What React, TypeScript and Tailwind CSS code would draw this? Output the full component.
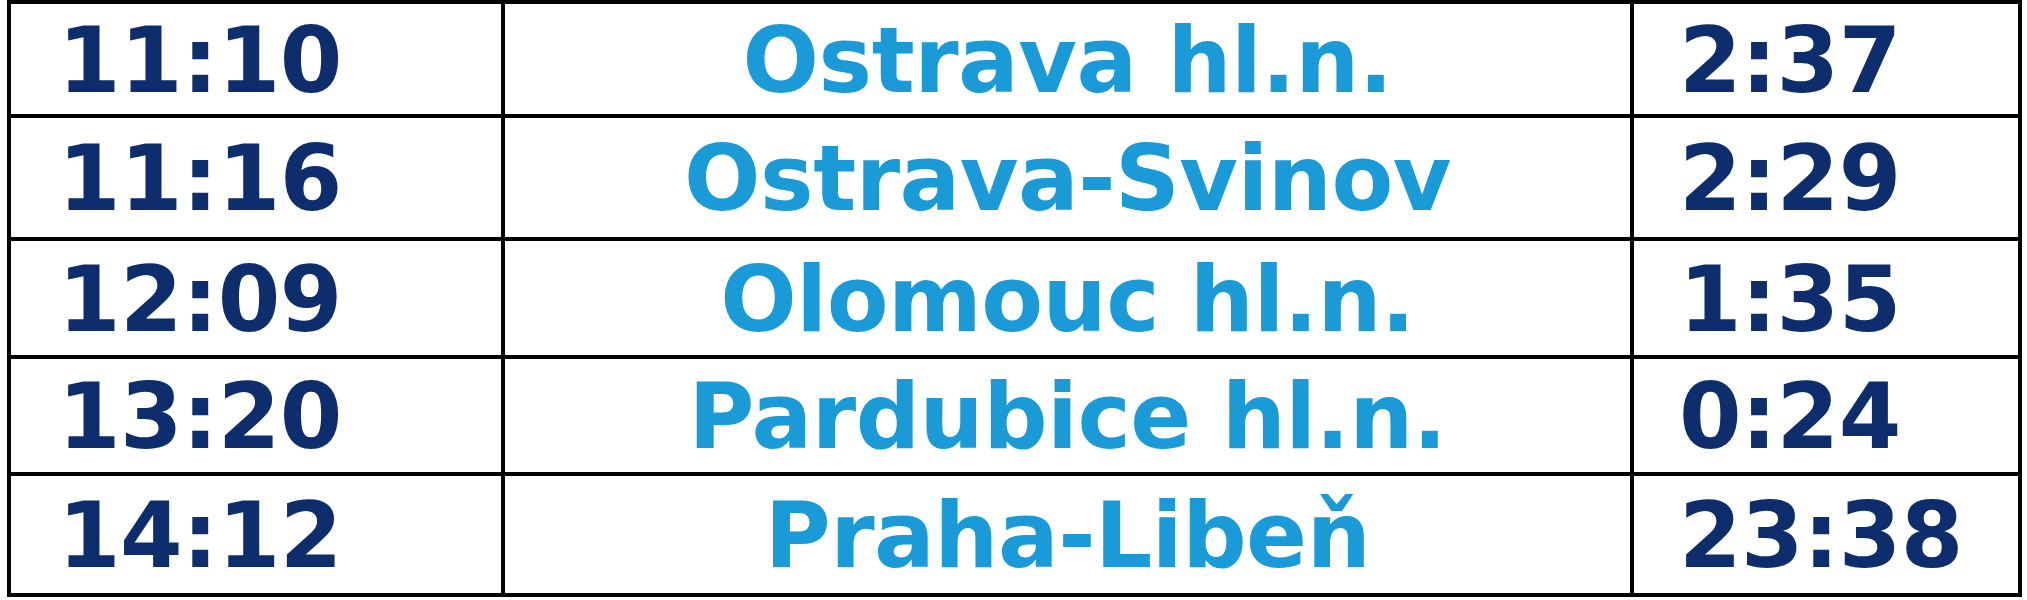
import React from "react";

const rows = [
  { time: "11:10", station: "Ostrava hl.n.", dur: "2:37", h: "h-[110px]" },
  { time: "11:16", station: "Ostrava-Svinov", dur: "2:29", h: "h-[119px]" },
  { time: "12:09", station: "Olomouc hl.n.", dur: "1:35", h: "h-[114px]" },
  { time: "13:20", station: "Pardubice hl.n.", dur: "0:24", h: "h-[113px]" },
  { time: "14:12", station: "Praha-Libeň", dur: "23:38", h: "h-[117px]" },
];

export default function App() {
  return (
    <div className="w-[2027px] h-[600px] bg-white overflow-hidden">
      <div
        className="ml-[7px] w-[2015px] bg-black p-[4px] grid grid-cols-[490px_1125px_384px] gap-[4px] font-bold text-[90px] leading-none"
        style={{ fontFamily: '"DejaVu Sans", Verdana, sans-serif' }}
      >
        {rows.map((r) => (
          <React.Fragment key={r.time}>
            <div className={`${r.h} bg-white flex items-center pl-[47px] text-[#0d2d6c] tracking-[-0.5px]`}>
              <span className="mt-[3px]">{r.time}</span>
            </div>
            <div className={`${r.h} bg-white flex items-center justify-center text-[#1a9bd7] tracking-[-0.5px]`}>
              <span className="mt-[3px]">{r.station}</span>
            </div>
            <div className={`${r.h} bg-white flex items-center pl-[45px] text-[#0d2d6c] tracking-[-0.5px]`}>
              <span className="mt-[3px]">{r.dur}</span>
            </div>
          </React.Fragment>
        ))}
      </div>
    </div>
  );
}
